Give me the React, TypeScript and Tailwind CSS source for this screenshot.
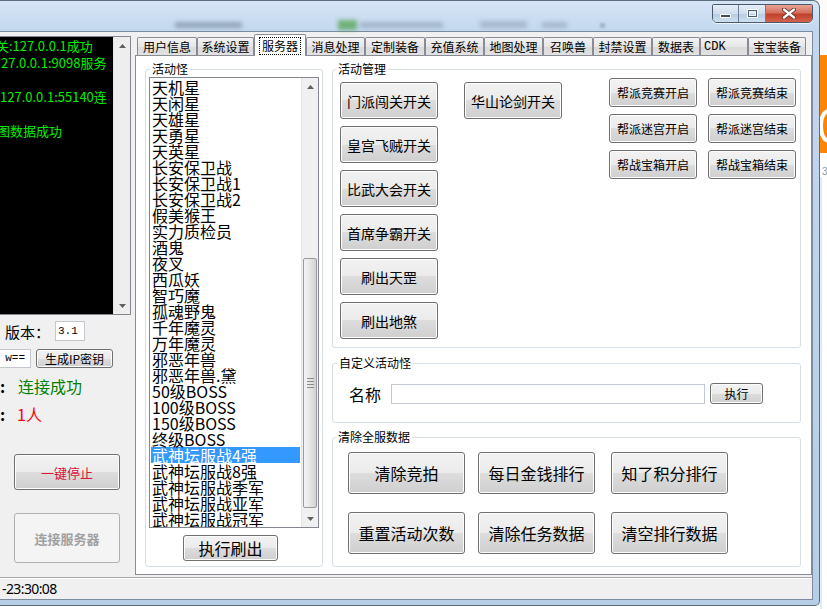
import React from "react";

const raised =
  "border border-[#707070] rounded-[3px] bg-[linear-gradient(to_bottom,#f2f2f2_0%,#ebebeb_50%,#dddddd_50%,#cfcfcf_100%)] shadow-[inset_0_0_0_1px_#fcfcfc] flex items-center justify-center whitespace-nowrap leading-none text-black";

function Btn({ className, children }: { className: string; children: React.ReactNode }) {
  return (
    <button type="button" className={`${raised} ${className}`}>
      {children}
    </button>
  );
}

const tabs = [
  { label: "用户信息", cls: "w-[60px]" },
  { label: "系统设置", cls: "w-[57px]" },
  { label: "服务器", cls: "w-[52px]", active: true },
  { label: "消息处理", cls: "w-[59px]" },
  { label: "定制装备", cls: "w-[60px]" },
  { label: "充值系统", cls: "w-[59px]" },
  { label: "地图处理", cls: "w-[59px]" },
  { label: "召唤兽", cls: "w-[50px]" },
  { label: "封禁设置", cls: "w-[59px]" },
  { label: "数据表", cls: "w-[48px]" },
  { label: "CDK", cls: "w-[48px]", mono: true },
  { label: "宝宝装备", cls: "w-[58px]" },
];

const monsters = [
  "天机星",
  "天闲星",
  "天雄星",
  "天勇星",
  "天英星",
  "长安保卫战",
  "长安保卫战1",
  "长安保卫战2",
  "假美猴王",
  "实力质检员",
  "酒鬼",
  "夜叉",
  "西瓜妖",
  "智巧魔",
  "孤魂野鬼",
  "千年魔灵",
  "万年魔灵",
  "邪恶年兽",
  "邪恶年兽.黛",
  "50级BOSS",
  "100级BOSS",
  "150级BOSS",
  "终级BOSS",
  "武神坛服战4强",
  "武神坛服战8强",
  "武神坛服战季军",
  "武神坛服战亚军",
  "武神坛服战冠军",
];

function UpArrow() {
  return (
    <svg width="7" height="4" viewBox="0 0 7 4">
      <path d="M0 4 L3.5 0 L7 4 Z" fill="#606060" />
    </svg>
  );
}

function DownArrow() {
  return (
    <svg width="7" height="4" viewBox="0 0 7 4">
      <path d="M0 0 L3.5 4 L7 0 Z" fill="#606060" />
    </svg>
  );
}

function CaptionButtons() {
  return (
    <div className="mt-[3px] mr-[6px] flex h-[19px] border border-[#4a5a6e] rounded-b-[5px] rounded-t-[2px] overflow-hidden shadow-[0_1px_0_rgba(255,255,255,0.7)]">
      <div className="w-[26px] h-full border-r border-[#6d7f95] bg-[linear-gradient(to_bottom,#e6eef8_0%,#cfdded_50%,#b7cbe2_51%,#cddff2_100%)] flex items-end justify-center pb-[4px]">
        <svg width="11" height="4" viewBox="0 0 11 4">
          <rect x="0.5" y="0.5" width="10" height="3" fill="#3c4a5c" stroke="#ffffff" />
        </svg>
      </div>
      <div className="w-[27px] h-full border-r border-[#6d7f95] bg-[linear-gradient(to_bottom,#e6eef8_0%,#cfdded_50%,#b7cbe2_51%,#cddff2_100%)] flex items-center justify-center">
        <svg width="11" height="9" viewBox="0 0 11 9">
          <rect x="0.5" y="0.5" width="10" height="8" fill="none" stroke="#ffffff" />
          <rect x="1.5" y="1.5" width="8" height="6" fill="none" stroke="#4a5a70" />
          <rect x="2.5" y="3" width="6" height="3.5" fill="none" stroke="#ffffff" strokeWidth="0.8" />
        </svg>
      </div>
      <div className="w-[46px] h-full bg-[linear-gradient(to_bottom,#e8a293_0%,#d4715f_45%,#c1402a_55%,#d4624e_100%)] flex items-center justify-center">
        <svg width="14" height="11" viewBox="0 0 14 11">
          <path d="M2 1.5 L12 9.5 M12 1.5 L2 9.5" stroke="#5a2a24" strokeWidth="4" strokeLinecap="round" />
          <path d="M2 1.5 L12 9.5 M12 1.5 L2 9.5" stroke="#ffffff" strokeWidth="2.4" strokeLinecap="round" />
        </svg>
      </div>
    </div>
  );
}

function TitleBar() {
  return (
    <div className="h-[30px] flex items-start">
      <div className="mt-[21px] ml-[175px] w-[67px] h-[6px] bg-[#71839a] opacity-60 blur-[2px]" />
      <div className="mt-[19px] ml-[96px] w-[19px] h-[10px] bg-[#5aa85a] opacity-80 blur-[2px]" />
      <div className="mt-[21px] ml-[3px] w-[83px] h-[6px] bg-[#8193a8] opacity-50 blur-[2px]" />
      <div className="mt-[20px] ml-[37px] w-[47px] h-[7px] bg-[#8798ac] opacity-50 blur-[2px]" />
      <div className="mt-[21px] ml-[15px] w-[25px] h-[6px] bg-[#8798ac] opacity-50 blur-[2px]" />
      <div className="mt-[22px] ml-[33px] w-[5px] h-[5px] bg-[#7d8ea3] opacity-50 blur-[1px]" />
      <div className="ml-auto">
        <CaptionButtons />
      </div>
    </div>
  );
}

function LeftPanel() {
  return (
    <div className="w-[135px] shrink-0 pt-[4px]">
      <div className="w-[131px] h-[279px] border border-l-0 border-[#828790] flex">
        <div className="w-[113px] h-full bg-black text-[#00f000] text-[13px] leading-[17px] whitespace-nowrap overflow-hidden">
          <div className="ml-[-4px]">关:127.0.0.1成功</div>
          <div className="ml-[1px]">27.0.0.1:9098服务</div>
          <div className="h-[17px]" />
          <div>127.0.0.1:55140连</div>
          <div className="h-[17px]" />
          <div className="ml-[-3px]">图数据成功</div>
        </div>
        <div className="w-[17px] h-full bg-[#eeeeee] border-l border-[#e2e2e2] flex flex-col">
          <div className="h-[17px] flex items-center justify-center">
            <UpArrow />
          </div>
          <div className="flex-1" />
          <div className="h-[17px] flex items-center justify-center">
            <DownArrow />
          </div>
        </div>
      </div>

      <div className="mt-[6px] h-[20px] flex items-center pl-[5px]">
        <span className="text-[15px] leading-none">版本：</span>
        <div className="ml-[5px] w-[30px] h-[20px] border border-[#c3c8ce] bg-white flex items-center pl-[2px] text-[11px] font-['Liberation_Mono',monospace]">
          3.1
        </div>
      </div>

      <div className="mt-[8px] h-[19px] flex items-center">
        <div className="ml-[-10px] w-[41px] h-[19px] border border-[#c3c8ce] bg-white flex items-center justify-end pr-[5px] text-[11px] font-['Liberation_Mono',monospace]">
          w==
        </div>
        <Btn className="ml-[5px] w-[77px] h-[19px] text-[12px]">生成IP密钥</Btn>
      </div>

      <div className="mt-[9px] h-[18px] flex items-center text-[16px] leading-none">
        <span className="w-[18px] font-bold">:</span>
        <span className="text-[#008000]">连接成功</span>
      </div>

      <div className="mt-[10px] h-[18px] flex items-center text-[16px] leading-none">
        <span className="w-[17px] font-bold">:</span>
        <span className="text-[#ff0000]">1人</span>
      </div>

      <Btn className="mt-[31px] ml-[14px] w-[106px] h-[36px] text-[13px] !text-[#dc143c]">一键停止</Btn>

      <button
        type="button"
        className="mt-[23px] ml-[14px] w-[106px] h-[50px] rounded-[3px] border border-[#adb2b5] bg-[#f4f4f4] flex items-center justify-center text-[13px] font-bold text-[#a0a0a0] leading-none"
      >
        连接服务器
      </button>
    </div>
  );
}

function TabStrip() {
  return (
    <div className="h-[23px] flex items-end pl-[2px]">
      {tabs.map((t) =>
        t.active ? (
          <div
            key={t.label}
            className={`${t.cls} h-[22px] mb-[-1px] relative z-10 bg-white border border-b-0 border-[#898c95] rounded-t-[2px] flex items-center justify-center text-[12px] leading-none`}
          >
            <span className="border border-dotted border-black px-[2px] py-[2px]">{t.label}</span>
          </div>
        ) : (
          <div
            key={t.label}
            className={`${t.cls} h-[18px] border border-b-0 border-[#898c95] rounded-t-[2px] bg-[linear-gradient(to_bottom,#f3f3f3,#e6e6e6_50%,#dadada_51%,#e2e2e2)] flex items-center text-[12px] leading-none ${
              t.mono ? "justify-start pl-[3px] font-['Liberation_Mono',monospace] text-[11px]" : "justify-center"
            }`}
          >
            {t.label}
          </div>
        )
      )}
    </div>
  );
}

function MonsterList() {
  return (
    <div className="mt-[1px] w-[170px] h-[451px] border border-[#828790] bg-white flex">
      <div className="w-[151px] px-[1px] pt-[1px] overflow-hidden">
        {monsters.map((m, i) => (
          <div
            key={m}
            className={`h-[16px] text-[16px] leading-[16px] pl-[1px] whitespace-nowrap ${
              i === 23 ? "bg-[#3399ff] text-white" : "text-black"
            }`}
          >
            {m}
          </div>
        ))}
      </div>
      <div className="w-[17px] h-full bg-[#f0f0f0] border-l border-[#e6e6e6] flex flex-col">
        <div className="h-[17px] flex items-center justify-center">
          <UpArrow />
        </div>
        <div className="flex-1 flex flex-col justify-end pb-[2px]">
          <div className="mx-[1px] h-[250px] rounded-[2px] border border-[#9a9a9a] bg-[linear-gradient(to_right,#f4f4f4,#e6e6e6_50%,#d0d0d0)] flex flex-col items-center justify-center gap-[2px]">
            <div className="w-[7px] h-[1px] bg-[#8a8a8a]" />
            <div className="w-[7px] h-[1px] bg-[#8a8a8a]" />
            <div className="w-[7px] h-[1px] bg-[#8a8a8a]" />
            <div className="w-[7px] h-[1px] bg-[#8a8a8a]" />
          </div>
        </div>
        <div className="h-[17px] flex items-center justify-center">
          <DownArrow />
        </div>
      </div>
    </div>
  );
}

const legendCls = "px-[2px] text-[12px] leading-[14px] text-black";

function ServerPage() {
  return (
    <div className="h-[520px] border border-[#898c95] bg-white flex pl-[9px] pt-[6px] gap-[9px]">
      <fieldset className="w-[178px] h-[505px] border border-[#d5dfe5] rounded-[3px] pl-[3px] pr-[2px]">
        <legend className={`ml-[1px] ${legendCls}`}>活动怪</legend>
        <MonsterList />
        <Btn className="mt-[7px] ml-[34px] w-[95px] h-[26px] text-[16px]">执行刷出</Btn>
      </fieldset>

      <div className="w-[469px] flex flex-col">
        <fieldset className="h-[286px] border border-[#d5dfe5] rounded-[3px] pl-[3px]">
          <legend className={legendCls}>活动管理</legend>
          <div className="flex items-start pl-[4px]">
            <div className="mt-[6px] flex flex-col gap-[7px]">
              <Btn className="w-[98px] h-[37px] text-[14px]">门派闯关开关</Btn>
              <Btn className="w-[98px] h-[37px] text-[14px]">皇宫飞贼开关</Btn>
              <Btn className="w-[98px] h-[37px] text-[14px]">比武大会开关</Btn>
              <Btn className="w-[98px] h-[37px] text-[14px]">首席争霸开关</Btn>
              <Btn className="w-[98px] h-[37px] text-[14px]">刷出天罡</Btn>
              <Btn className="w-[98px] h-[37px] text-[14px]">刷出地煞</Btn>
            </div>
            <Btn className="mt-[6px] ml-[26px] w-[98px] h-[37px] text-[14px]">华山论剑开关</Btn>
            <div className="mt-[2px] ml-[47px] grid grid-cols-[88px_88px] gap-x-[11px] gap-y-[7px]">
              <Btn className="h-[29px] text-[12px]">帮派竞赛开启</Btn>
              <Btn className="h-[29px] text-[12px]">帮派竞赛结束</Btn>
              <Btn className="h-[29px] text-[12px]">帮派迷宫开启</Btn>
              <Btn className="h-[29px] text-[12px]">帮派迷宫结束</Btn>
              <Btn className="h-[29px] text-[12px]">帮战宝箱开启</Btn>
              <Btn className="h-[29px] text-[12px]">帮战宝箱结束</Btn>
            </div>
          </div>
        </fieldset>

        <fieldset className="mt-[8px] h-[67px] border border-[#d5dfe5] rounded-[3px] pl-[3px]">
          <legend className={`ml-[1px] ${legendCls}`}>自定义活动怪</legend>
          <div className="mt-[13px] pl-[13px] h-[21px] flex items-center">
            <span className="text-[16px] leading-none">名称</span>
            <div className="ml-[10px] w-[314px] h-[20px] border border-[#c2c8cf] bg-white" />
            <Btn className="ml-[5px] w-[53px] h-[21px] text-[12px]">执行</Btn>
          </div>
        </fieldset>

        <fieldset className="mt-[7px] h-[137px] border border-[#d5dfe5] rounded-[3px] pl-[3px]">
          <legend className={legendCls}>清除全服数据</legend>
          <div className="mt-[8px] pl-[12px] flex">
            <Btn className="w-[117px] h-[42px] text-[16px]">清除竞拍</Btn>
            <Btn className="ml-[13px] w-[117px] h-[42px] text-[16px]">每日金钱排行</Btn>
            <Btn className="ml-[16px] w-[117px] h-[42px] text-[16px]">知了积分排行</Btn>
          </div>
          <div className="mt-[18px] pl-[12px] flex">
            <Btn className="w-[117px] h-[42px] text-[16px]">重置活动次数</Btn>
            <Btn className="ml-[13px] w-[117px] h-[42px] text-[16px]">清除任务数据</Btn>
            <Btn className="ml-[16px] w-[117px] h-[42px] text-[16px]">清空排行数据</Btn>
          </div>
        </fieldset>
      </div>
    </div>
  );
}

function DesktopEdge() {
  return (
    <div className="flex-1 flex flex-col bg-white">
      <div className="h-[55px] bg-[#fbfbfb]" />
      <div className="h-[98px] bg-[#ff8400] flex flex-col justify-end pb-[10px] overflow-hidden">
        <svg width="7" height="34" viewBox="0 0 7 34">
          <path d="M8 2 C2 4 1 12 1 17 C1 24 3 30 8 32" stroke="#ffffff" strokeWidth="4" fill="none" />
        </svg>
      </div>
      <div className="h-[14px]" />
      <div className="pl-[2px] text-[10px] leading-none text-[#8a9aa8] font-['Liberation_Sans',sans-serif]">3</div>
      <div className="flex-1 border-l-2 border-[#dfeaf5]" />
    </div>
  );
}

export default function App() {
  return (
    <div className="w-[827px] h-[609px] overflow-hidden bg-white flex font-['Noto_Sans_CJK_SC',sans-serif] text-black">
      <div className="w-[820px] h-[606px] shrink-0 flex flex-col rounded-tr-[7px] rounded-br-[5px] border-t border-r border-b border-[#5d6d80] bg-[linear-gradient(to_bottom,#d6e5f6_0px,#c2d7ee_30px,#b6cde7_100%)]">
        <TitleBar />
        <div className="w-[813px] h-[569px] border-t border-r border-b border-[#7c8ca0] bg-[#f0f0f0] flex flex-col">
          <div className="h-[545px] flex">
            <LeftPanel />
            <div className="flex-1 flex flex-col">
              <TabStrip />
              <ServerPage />
            </div>
          </div>
          <div className="flex-1 border-t border-[#a9a9a9] shadow-[inset_0_1px_0_#ffffff] flex items-center pl-[2px] text-[14px] leading-none tracking-[-0.6px] font-['Noto_Sans',sans-serif]">
            -23:30:08
          </div>
        </div>
        <div className="flex-1" />
      </div>
      <DesktopEdge />
    </div>
  );
}
